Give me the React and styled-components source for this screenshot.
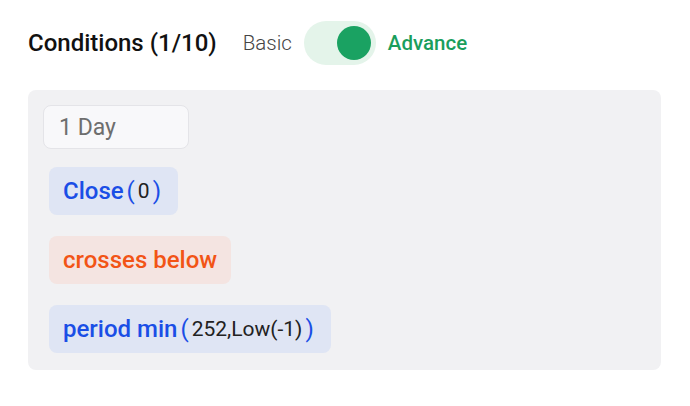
import React from 'react';
import styled, { createGlobalStyle } from 'styled-components';

const GlobalStyle = createGlobalStyle`
  body {
    margin: 0;
    background: #ffffff;
    font-family: Roboto, "Noto Sans", Arial, sans-serif;
  }
`;

const Page = styled.div`
  padding: 21px 29px 0 28px;
  width: 690px;
  box-sizing: border-box;
`;

const Header = styled.div`
  display: flex;
  align-items: center;
  height: 44px;
`;

const Title = styled.h2`
  margin: 0 26px 0 0;
  font-size: 24px;
  font-weight: 500;
  color: #111111;
`;

const ModeLabel = styled.span`
  font-size: 20.5px;
  font-weight: ${p => (p.active ? 500 : 300)};
  color: ${p => (p.active ? '#1a9e5c' : '#444444')};
`;

const Toggle = styled.div`
  width: 72px;
  height: 44px;
  margin: 0 12px;
  border-radius: 22px;
  background: #e4f4ea;
  display: flex;
  align-items: center;
  justify-content: ${p => (p.on ? 'flex-end' : 'flex-start')};
  padding: 0 5px;
  box-sizing: border-box;
`;

const Knob = styled.div`
  width: 34px;
  height: 34px;
  border-radius: 50%;
  background: #1aa262;
`;

const Panel = styled.div`
  margin-top: 25px;
  background: #f1f1f3;
  border-radius: 8px;
  padding: 15px 15px 17px;
  display: flex;
  flex-direction: column;
  align-items: flex-start;
`;

const Timeframe = styled.div`
  width: 146px;
  height: 44px;
  box-sizing: border-box;
  border: 1px solid #e4e4e8;
  border-radius: 8px;
  background: #f8f8fa;
  color: #6e6e6e;
  font-size: 23px;
  display: flex;
  align-items: center;
  padding-left: 15px;
  margin-bottom: 18px;
`;

const Chip = styled.div`
  margin-left: 6px;
  height: 48px;
  display: inline-flex;
  align-items: center;
  padding: 0 14px;
  border-radius: 8px;
  background: ${p => (p.tone === 'orange' ? '#f4e4e1' : '#dfe5f4')};
  color: ${p => (p.tone === 'orange' ? '#f25416' : '#1a4ee6')};
  font-size: 24px;
  font-weight: 500;
  & + & {
    margin-top: 21px;
  }
`;

const Paren = styled.span`
  color: #1a4ee6;
  font-weight: 400;
  font-size: 24px;
  margin: 0 3px;
`;

const Arg = styled.span`
  color: #222222;
  font-weight: 400;
  font-size: 21px;
`;

const Func = ({ name, args }) => (
  <Chip>
    {name}
    <Paren>(</Paren>
    <Arg>{args}</Arg>
    <Paren>)</Paren>
  </Chip>
);

export default function App() {
  return (
    <>
      <GlobalStyle />
      <Page>
        <Header>
          <Title>Conditions (1/10)</Title>
          <ModeLabel>Basic</ModeLabel>
          <Toggle on>
            <Knob />
          </Toggle>
          <ModeLabel active>Advance</ModeLabel>
        </Header>
        <Panel>
          <Timeframe>1 Day</Timeframe>
          <Func name="Close" args="0" />
          <Chip tone="orange">crosses below</Chip>
          <Func name="period min" args="252,Low(-1)" />
        </Panel>
      </Page>
    </>
  );
}
